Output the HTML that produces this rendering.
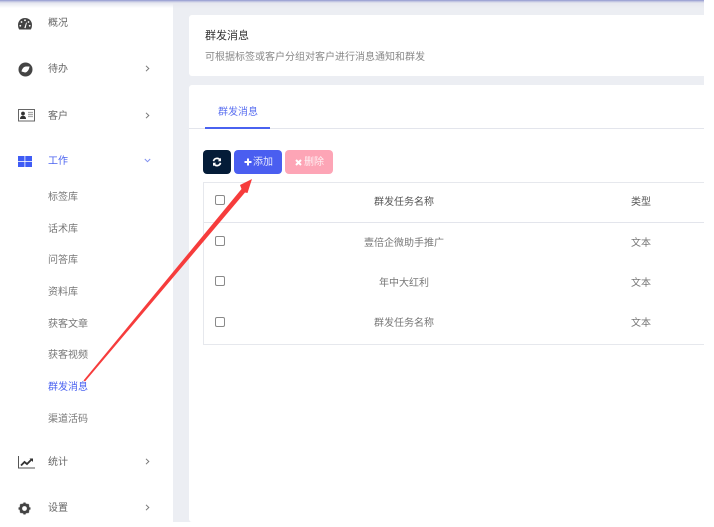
<!DOCTYPE html>
<html lang="zh">
<head>
<meta charset="utf-8">
<style>
html,body{margin:0;padding:0;background:#fff}
body{width:714px;height:527px;overflow:hidden;position:relative;font-family:"Liberation Sans","Noto Sans CJK SC",sans-serif}
#app{position:absolute;left:0;top:0;width:704px;height:522px;overflow:hidden;background:#eceef3;filter:blur(.3px)}
.a{position:absolute;white-space:nowrap}
#side{position:absolute;left:0;top:0;width:173px;height:522px;background:#fff}
.m{position:absolute;left:48px;font-size:10px;line-height:14px;color:#666}
.s{position:absolute;left:48px;font-size:10px;line-height:14px;color:#777}
.ic{position:absolute;left:18px}
.ch{position:absolute;left:145px;width:5px;height:7px}
#top{position:absolute;left:0;top:0;width:704px;height:8px;background:linear-gradient(#8f96cf 0,#c3c6e2 1.5px,#e6e7ef 3px,rgba(240,241,245,0) 8px);z-index:3}
.panel{position:absolute;left:189px;width:515px;background:#fff;border-radius:3px 0 0 3px}
.td{position:absolute;font-size:10px;line-height:14px;color:#777;text-align:center}
.th{color:#555}
.cb{position:absolute;left:215px;width:10px;height:10px;box-sizing:border-box;border:1px solid #8a8a8a;border-radius:2px;background:#fff}
.btn{position:absolute;top:150px;height:24px;border-radius:4px;color:#fff;font-size:10px;line-height:24px}
.btn span{position:absolute;white-space:nowrap}
</style>
</head>
<body>
<div id="app">
  <div id="side">
    <svg class="ic" style="top:18px" width="14" height="12" viewBox="0 0 14 12"><path d="M7 0C3 0 0 3 0 7c0 1.800.4 3.300 1.200 4.500h11.600C13.600 10.300 14 8.800 14 7c0-4-3-7-7-7z" fill="#444"/><g fill="#fff"><circle cx="7" cy="2.300" r=".9"/><circle cx="3.500" cy="4" r=".9"/><circle cx="10.500" cy="4" r=".9"/><circle cx="2.300" cy="7.800" r=".9"/><circle cx="11.700" cy="7.800" r=".9"/><path d="M6.300 10l1.800-5.500.8.300-1.300 5.400z"/></g></svg>
    <div class="m" style="top:17px">概况</div>

    <svg class="ic" style="top:62px" width="15" height="15" viewBox="0 0 15 15"><circle cx="7.500" cy="7.500" r="7" fill="#444"/><path d="M3.500 9.500c.5-3 2.500-5 4.500-5h3.500c-.3 3-2.300 6-4.500 6z" fill="#fff"/></svg>
    <div class="m" style="top:63px">待办</div>
    <svg class="ch" style="top:65px" viewBox="0 0 5 7"><path d="M1 .8l2.800 2.700L1 6.200" fill="none" stroke="#777" stroke-width="1"/></svg>

    <svg class="ic" style="top:109px" width="17" height="13" viewBox="0 0 17 13"><rect x=".5" y=".5" width="16" height="11.500" fill="#fff" stroke="#666"/><circle cx="5" cy="4.500" r="1.900" fill="#333"/><path d="M2 10c0-2.500 1.500-3.300 3-3.300S8 7.500 8 10z" fill="#333"/><path d="M10 3.500h5M10 5.500h5M10 7.500h5" stroke="#aaa" stroke-width="1.200"/></svg>
    <div class="m" style="top:110px">客户</div>
    <svg class="ch" style="top:112px" viewBox="0 0 5 7"><path d="M1 .8l2.800 2.700L1 6.200" fill="none" stroke="#777" stroke-width="1"/></svg>

    <svg class="ic" style="top:156px" width="14" height="11" viewBox="0 0 14 11"><g fill="#3f5cf5"><rect width="6.500" height="5"/><rect x="7.300" width="6.700" height="5"/><rect y="5.800" width="6.500" height="5.200"/><rect x="7.300" y="5.800" width="6.700" height="5.200"/></g></svg>
    <div class="m" style="top:155px;color:#4a62f0">工作</div>
    <svg class="a" style="left:144px;top:158px" width="7" height="5" viewBox="0 0 7 5"><path d="M.8 1l2.700 2.700L6.200 1" fill="none" stroke="#7f8ff0" stroke-width="1"/></svg>

    <div class="s" style="top:191px">标签库</div>
    <div class="s" style="top:223px">话术库</div>
    <div class="s" style="top:254px">问答库</div>
    <div class="s" style="top:286px">资料库</div>
    <div class="s" style="top:318px">获客文章</div>
    <div class="s" style="top:349px">获客视频</div>
    <div class="s" style="top:381px;color:#4a62f0">群发消息</div>
    <div class="s" style="top:413px">渠道活码</div>

    <svg class="ic" style="top:456px" width="17" height="13" viewBox="0 0 17 13"><path d="M.5 0v12H17" fill="none" stroke="#555" stroke-width="1"/><path d="M3 9.500L6.500 6l2.500 2L14 3" fill="none" stroke="#333" stroke-width="1.800"/><path d="M11.500 2.500H15V6z" fill="#333"/></svg>
    <div class="m" style="top:456px">统计</div>
    <svg class="ch" style="top:458px" viewBox="0 0 5 7"><path d="M1 .8l2.800 2.700L1 6.200" fill="none" stroke="#777" stroke-width="1"/></svg>

    <svg class="ic" style="top:502px" width="13" height="13" viewBox="0 0 13 13"><circle cx="6.500" cy="6.500" r="3.800" fill="none" stroke="#444" stroke-width="2.800"/><path d="M6.500.5v12M.5 6.500h12M2.300 2.300l8.400 8.400M10.700 2.300l-8.400 8.400" stroke="#444" stroke-width="2.200" stroke-dasharray="2.200 7.600"/></svg>
    <div class="m" style="top:502px">设置</div>
    <svg class="ch" style="top:504px" viewBox="0 0 5 7"><path d="M1 .8l2.800 2.700L1 6.200" fill="none" stroke="#777" stroke-width="1"/></svg>
  </div>

  <div class="panel" style="top:15px;height:61px">
    <div class="a" style="left:16px;top:14px;font-size:11px;line-height:15px;color:#333">群发消息</div>
    <div class="a" style="left:16px;top:36px;font-size:10px;line-height:14px;color:#888">可根据标签或客户分组对客户进行消息通知和群发</div>
  </div>

  <div class="panel" style="top:85px;height:437px">
    <div class="a" style="left:0;top:43px;width:515px;height:1px;background:#e3e5ec"></div>
    <div class="a" style="left:16px;top:42px;width:65px;height:2px;background:#4a62f0"></div>
    <div class="a" style="left:29px;top:21px;font-size:10px;line-height:14px;color:#5a6ff0">群发消息</div>
  </div>

  <div class="btn" style="left:203px;width:28px;background:#041c38">
    <svg style="position:absolute;left:9px;top:7px" width="10" height="10" viewBox="0 0 10 10"><path d="M1.500 4.200A3.600 3.600 0 0 1 8 3M8.500 5.800A3.600 3.600 0 0 1 2 7" fill="none" stroke="#fff" stroke-width="1.700"/><path d="M9 .8v3.400H5.800zM1 9.200V5.800h3.200z" fill="#fff"/></svg>
  </div>
  <div class="btn" style="left:234px;width:48px;background:#4a5ef0">
    <svg style="position:absolute;left:10px;top:8px" width="8" height="8" viewBox="0 0 8 8"><path d="M4 .5v7M.5 4h7" stroke="#fff" stroke-width="2"/></svg>
    <span style="left:19px;top:1px;opacity:.85">添加</span>
  </div>
  <div class="btn" style="left:285px;width:48px;background:#fda5b6">
    <svg style="position:absolute;left:10px;top:9px" width="7" height="7" viewBox="0 0 7 7"><path d="M1 1l5 5M6 1L1 6" stroke="#fff" stroke-width="2"/></svg>
    <span style="left:19px;top:1px;opacity:.85">删除</span>
  </div>

  <div class="a" style="left:203px;top:182px;width:501px;height:161px;border:1px solid #e6e8ed;border-right:0;background:#fff"></div>
  <div class="a" style="left:204px;top:222px;width:500px;height:1px;background:#e3e5ec"></div>

  <div class="cb" style="top:195px"></div>
  <div class="cb" style="top:236px"></div>
  <div class="cb" style="top:276px"></div>
  <div class="cb" style="top:317px"></div>

  <div class="td th" style="left:304px;width:200px;top:196px">群发任务名称</div>
  <div class="td th" style="left:611px;width:60px;top:196px">类型</div>
  <div class="td" style="left:304px;width:200px;top:237px">壹倍企微助手推广</div>
  <div class="td" style="left:611px;width:60px;top:237px">文本</div>
  <div class="td" style="left:304px;width:200px;top:277px">年中大红利</div>
  <div class="td" style="left:611px;width:60px;top:277px">文本</div>
  <div class="td" style="left:304px;width:200px;top:317px">群发任务名称</div>
  <div class="td" style="left:611px;width:60px;top:317px">文本</div>

  <svg class="a" style="left:0;top:0;z-index:4" width="704" height="522" viewBox="0 0 704 522"><path d="M83.500 380.500L241.500 189 240 185 252 179 247.500 193 245 192.500 85 381.500z" fill="#f63c3c"/></svg>
  <div id="top"></div>
</div>
</body>
</html>
